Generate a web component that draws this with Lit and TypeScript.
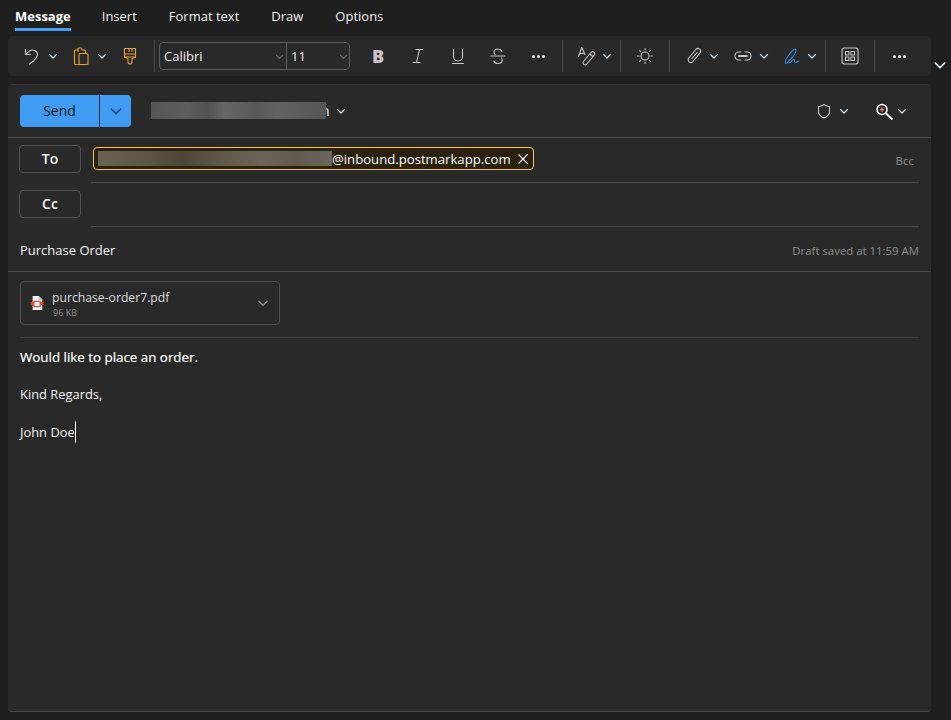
import { LitElement, html, css, svg } from 'lit';
import { customElement } from 'lit/decorators.js';

const chevronPath = svg`<path d="M2.500 4.500 6 8l3.500-3.500" fill="none" stroke="currentColor" stroke-width="1.200" stroke-linecap="round" stroke-linejoin="round"/>`;

const chevron = (cls = '') => html`<span class="chev ${cls}"><svg width="12" height="12" viewBox="0 0 12 12">${chevronPath}</svg></span>`;

const icon = (content: unknown) => html`<span class="ico"><svg width="20" height="20" viewBox="0 0 20 20" fill="none" stroke="currentColor" stroke-width="1.100" stroke-linecap="round" stroke-linejoin="round">${content}</svg></span>`;

const dots = () => html`<span class="ico dots"><i></i><i></i><i></i></span>`;

const undoIcon = svg`<path d="M3.500 3.500v5h5"/><path d="M3.800 8.200 7.500 5c3-2.200 8-.5 8 3.600 0 2.600-2 4.400-4 6.400L7.500 18"/>`;
const pasteIcon = svg`<path d="M7 4H4.500A1 1 0 0 0 3.500 5v12.500a1 1 0 0 0 1 1h3"/><path d="M7 5.500V3.200A1 1 0 0 1 8 2h2a1 1 0 0 1 1 1v1h2.500a1 1 0 0 1 1 1v2"/><rect x="8" y="7.500" width="9" height="11" rx="1"/>`;
const brushIcon = svg`<path d="M4.500 2.500h11v8.500h-11z"/><path d="M4.500 8h11M9 2.500v3M12 2.500v3"/><path d="M4.500 11l3.500 1.500v3.500a2 2 0 0 0 4 0v-3.500l3.500-1.500"/>`;
const strikeIcon = svg`<path d="M14 5.500C13 3.500 11.500 3 10 3 7.500 3 6 4.500 6 6.200c0 1 .5 1.800 1.200 2.300"/><path d="M3 10h14"/><path d="M13.500 12c.5.700.7 1.300.7 2 0 2-1.800 3.500-4.200 3.500-2 0-3.500-.8-4.200-2.500"/>`;
const stylesIcon = svg`<path d="M1.500 10.500 4.800 1.500 8 8.500M2.800 7.500h4"/><path d="M6.500 15.500 14 6.500a2 2 0 0 1 3.200 2.500L9.800 18a2 2 0 0 1-3.300-2.500z"/><path d="M12.800 8l3 2.500"/>`;
const sunIcon = svg`<circle cx="10" cy="10" r="4"/><path d="M10 2.500v1.500M10 16v1.500M2.500 10H4M16 10h1.500M4.700 4.700l1 1M14.300 14.300l1 1M15.300 4.700l-1 1M5.700 14.300l-1 1"/>`;
const clipIcon = svg`<path d="M4.800 12 11.800 3.500a2.700 2.700 0 0 1 4.200 3.400L9 15.500a2.700 2.700 0 0 1-4.200-3.500z"/><path d="M8 12.500l5-6"/>`;
const linkIcon = svg`<path d="M8 6H6a4 4 0 0 0 0 8h2"/><path d="M12 6h2a4 4 0 0 1 0 8h-2"/><path d="M6 10h8" stroke-width="1.800"/>`;
const signIcon = svg`<path d="M3.500 17C2 15 7 8 11.500 3.500c1-1 3-.5 2.500 1.500-1 3.500-5 8-7.500 10.500-1.500 1.500-3 2.500-3 1.500z"/><path d="M7 17c2 0 3-3.500 4.500-3.500s.5 3 2 3 2-1.500 3.500-1.500"/>`;
const gridIcon = svg`<rect x="2" y="2" width="16" height="16" rx="2.500"/><rect x="5.500" y="5.500" width="3.500" height="3.500"/><rect x="11" y="5.500" width="3.500" height="3.500"/><rect x="5.500" y="11" width="3.500" height="3.500"/><rect x="11" y="11" width="3.500" height="3.500"/>`;

@customElement('app-root')
export class AppRoot extends LitElement {
  static styles = css`
    :host {
      display: block;
      width: 951px;
      height: 720px;
      overflow: hidden;
      background: #1f1f1f;
      color: #fff;
      font-family: "Open Sans", "Noto Sans", sans-serif;
      font-size: 13px;
    }

    .tabs {
      display: flex;
      height: 36px;
      padding-left: 15px;
      gap: 32px;
    }

    .tab {
      height: 31px;
      box-sizing: border-box;
      padding-top: 7px;
      line-height: 18px;
      color: #f2f2f2;
    }

    .tab.on {
      margin-right: -1px;
      font-weight: 700;
      color: #fff;
      border-bottom: 3px solid #479ef5;
    }

    .ribbon-row {
      display: flex;
      padding-left: 8px;
    }

    .toolbar {
      display: flex;
      align-items: center;
      width: 923px;
      height: 40px;
      box-sizing: border-box;
      padding-left: 12px;
      background: #292929;
      border-radius: 4px;
      color: #c8c8c8;
    }

    .more-ribbon {
      flex: 1;
      display: flex;
      justify-content: center;
      align-items: flex-end;
      padding: 0 2px 3px 0;
      color: #eaf4fc;
    }

    .more-ribbon svg {
      width: 16px;
      height: 16px;
    }

    .group {
      display: flex;
      align-items: center;
      gap: 7px;
    }

    .group.text {
      gap: 16px;
      padding: 0 12px 0 16px;
    }

    .group.pad {
      padding: 0 12px;
    }

    .group.tight {
      padding: 0 4px 0 12px;
    }

    .group.first {
      padding-right: 12px;
    }

    .split {
      display: flex;
      align-items: center;
    }

    .split.close .chev {
      margin-left: -1px;
    }

    .split.wide {
      margin-left: 1px;
    }

    .ico {
      display: flex;
      justify-content: center;
      align-items: center;
      width: 24px;
      height: 24px;
    }

    .chev {
      display: flex;
      justify-content: center;
      align-items: center;
      width: 18px;
      color: #d4e4f0;
    }

    .orange {
      color: #e8a035;
    }

    .blue {
      color: #2f83da;
    }

    .bold-b {
      font-weight: 800;
      font-size: 18px;
      color: #c4c4c4;
    }

    .dots {
      gap: 2px;
    }

    .dots i {
      width: 3px;
      height: 3px;
      border-radius: 50%;
      background: #f0f0f0;
    }

    .sep {
      width: 1px;
      height: 32px;
      background: #4d4d4d;
      flex: none;
    }

    .fontbox {
      display: flex;
      width: 191px;
      height: 28px;
      box-sizing: border-box;
      margin-left: 4px;
      border: 1px solid #5c5c5c;
      border-radius: 4px;
      color: #f2f2f2;
      line-height: 26px;
    }

    .fontbox span {
      display: flex;
      justify-content: space-between;
      align-items: center;
      box-sizing: border-box;
      padding: 0 0 0 4px;
    }

    .fontbox .chev {
      color: #6f6f6f;
      padding: 0;
      width: 12px;
    }

    .fontbox .chev svg {
      width: 11px;
      height: 11px;
    }

    .face {
      width: 127px;
      border-right: 1px solid #5c5c5c;
    }

    .size {
      flex: 1;
    }

    .fontbox .size .chev {
      margin-right: -1px;
    }

    .card {
      display: flex;
      flex-direction: column;
      width: 923px;
      height: 628px;
      box-sizing: border-box;
      margin: 8px 0 0 8px;
      background: #292929;
      border-top: 1px solid #333;
      border-bottom: 1px solid #484848;
      border-radius: 4px;
    }

    .head {
      display: flex;
      align-items: center;
      height: 53px;
      box-sizing: border-box;
      padding: 0 0 1px 12px;
      border-bottom: 1px solid #4a4a4a;
      flex: none;
    }

    .send {
      display: flex;
      width: 111px;
      height: 32px;
      border-radius: 4px;
      overflow: hidden;
      background: #3f9cf2;
      color: #111;
      line-height: 32px;
      font-size: 14px;
    }

    .send b {
      width: 79px;
      font-weight: 500;
      text-align: center;
      border-right: 1px solid #14283a;
    }

    .send span {
      flex: 1;
      display: flex;
      justify-content: center;
      align-items: center;
      color: #1c4a72;
    }

    .send svg {
      width: 16px;
      height: 16px;
    }

    .from {
      display: flex;
      align-items: center;
      margin-left: 20px;
      font-size: 14px;
    }

    .smear {
      display: block;
      flex: none;
      width: 175px;
      height: 17px;
      background: linear-gradient(90deg, #555 0%, #5e5e5e 20%, #525252 32%, #666 42%, #595959 60%, #626262 72%, #555 100%);
    }

    /* the address is redacted: the smear hides all but the end of its last letter */
    .from .smear {
      position: relative;
      z-index: 1;
    }

    .from .tail {
      margin-left: -5px;
      line-height: 17px;
    }

    .from .chev {
      margin-left: 2px;
    }

    .head-right {
      display: flex;
      align-items: center;
      margin-left: auto;
      padding-right: 20px;
    }

    .head-right .shield {
      margin-right: -1px;
      color: #b9c8d4;
    }

    .head-right .zoom {
      color: #fff;
      margin-left: 19px;
    }

    .head-right .zoom + .chev {
      margin-left: -3px;
    }

    .row {
      display: flex;
      align-items: flex-start;
      height: 44.500px;
      box-sizing: border-box;
      padding: 7px 12px 0 11px;
      flex: none;
    }

    .addr {
      width: 62px;
      height: 28px;
      box-sizing: border-box;
      border: 1px solid #505050;
      border-radius: 4px;
      font-size: 14px;
      font-weight: 600;
      line-height: 26px;
      text-align: center;
      color: #f4f4f4;
      flex: none;
    }

    .field {
      flex: 1;
      display: flex;
      align-self: stretch;
      justify-content: space-between;
      box-sizing: border-box;
      margin: -7px 0 0 10px;
      padding-top: 9px;
      border-bottom: 1px solid #4a4a4a;
    }

    .pill {
      display: flex;
      align-items: center;
      height: 23px;
      box-sizing: border-box;
      margin-left: 2px;
      padding: 0 4px 0 4px;
      background: #2b2110;
      border: 1px solid #f5c84a;
      border-radius: 4px;
      font-size: 13.150px;
    }

    .pill .smear {
      width: 234px;
      height: 15px;
      background: linear-gradient(90deg, #6a6255 0%, #5b5447 22%, #4d4536 36%, #5f5849 52%, #6b6659 70%, #605a4e 85%, #6c675d 100%);
    }

    .pill svg {
      margin-left: 6px;
      width: 12px;
      height: 12px;
    }

    .bcc {
      padding: 6px 5px 0 0;
      font-size: 11.500px;
      color: #8e8e8e;
    }

    .subject {
      display: flex;
      justify-content: space-between;
      align-items: center;
      height: 45px;
      box-sizing: border-box;
      padding: 2px 12px 0;
      border-bottom: 1px solid #4a4a4a;
      color: #f2f2f2;
      flex: none;
    }

    .subject small {
      font-size: 11.400px;
      color: #8e8e8e;
    }

    .attach-wrap {
      margin: 0 12px;
      padding: 9px 0 12px;
      border-bottom: 1px solid #3e3e3e;
    }

    .attach {
      display: flex;
      align-items: center;
      width: 260px;
      height: 44px;
      box-sizing: border-box;
      padding: 0 7px 0 9px;
      border: 1px solid #505050;
      border-radius: 4px;
    }

    .attach .doc {
      flex: none;
      width: 14px;
      height: 16px;
    }

    .attach-text {
      flex: 1;
      display: flex;
      flex-direction: column;
      margin: 1px 0 0 8px;
    }

    .attach-name {
      font-size: 12.200px;
      line-height: 17px;
      color: #dedede;
    }

    .attach-size {
      margin-left: 1px;
      font-size: 9px;
      line-height: 13px;
      color: #8c8c8c;
    }

    .attach .chev {
      color: #8f8f8f;
    }

    .attach .chev svg {
      width: 14px;
      height: 14px;
    }

    .body {
      padding: 9.500px 12px 0;
      font-size: 12.900px;
      line-height: 18.800px;
      color: #f4f4f4;
    }

    .body p {
      margin: 0;
      min-height: 18.800px;
    }

    .body .lead {
      font-size: 13.350px;
      font-weight: 500;
      color: #fff;
      -webkit-text-stroke: 0.2px #fff;
    }

    .caret {
      border-right: 1px solid #fff;
      padding: 2px 0;
    }
  `;

  render() {
    return html`
      <nav class="tabs">
        <div class="tab on">Message</div>
        <div class="tab">Insert</div>
        <div class="tab">Format text</div>
        <div class="tab">Draw</div>
        <div class="tab">Options</div>
      </nav>

      <div class="ribbon-row">
        <div class="toolbar">
          <div class="group first">
            <div class="split">${icon(undoIcon)}${chevron()}</div>
            <div class="split"><span class="orange">${icon(pasteIcon)}</span>${chevron()}</div>
            <span class="orange">${icon(brushIcon)}</span>
          </div>
          <div class="sep"></div>
          <div class="fontbox">
            <span class="face">Calibri ${chevron()}</span>
            <span class="size">11 ${chevron()}</span>
          </div>
          <div class="group text">
            <span class="ico bold-b">B</span>
            ${icon(svg`<path d="M8 3.500h7M5 16.500h7M11.500 3.500l-3 13"/>`)}
            ${icon(svg`<path d="M5.500 3.500v7a4.500 4.500 0 0 0 9 0v-7M4.500 17.500h11"/>`)}
            ${icon(strikeIcon)}
            ${dots()}
          </div>
          <div class="sep"></div>
          <div class="group tight"><div class="split close">${icon(stylesIcon)}${chevron()}</div></div>
          <div class="sep"></div>
          <div class="group pad">${icon(sunIcon)}</div>
          <div class="sep"></div>
          <div class="group tight">
            <div class="split close">${icon(clipIcon)}${chevron()}</div>
            <div class="split wide">${icon(linkIcon)}${chevron()}</div>
            <div class="split close"><span class="blue">${icon(signIcon)}</span>${chevron()}</div>
          </div>
          <div class="sep"></div>
          <div class="group pad">${icon(gridIcon)}</div>
          <div class="sep"></div>
          <div class="group pad">${dots()}</div>
        </div>
        <div class="more-ribbon"><svg viewBox="0 0 12 12">${chevronPath}</svg></div>
      </div>

      <section class="card">
        <div class="head">
          <div class="send">
            <b>Send</b>
            <span><svg viewBox="0 0 12 12">${chevronPath}</svg></span>
          </div>
          <div class="from">
            <span class="smear"></span><span class="tail">n</span>${chevron()}
          </div>
          <div class="head-right">
            <span class="shield">${icon(svg`<path d="M10 3.500c1.800 1.300 3.500 2 5.500 2v5c0 3-2 5-5.500 6.500-3.500-1.500-5.500-3.500-5.500-6.500v-5c2 0 3.700-.7 5.500-2z"/>`)}</span>
            ${chevron()}
            <span class="ico zoom">
              <svg width="20" height="20" viewBox="0 0 20 20" fill="none">
                <circle cx="8" cy="8.500" r="5" stroke="currentColor" stroke-width="1.500"/>
                <path d="M12 12.500 18 18" stroke="currentColor" stroke-width="1.800" stroke-linecap="round"/>
                <path d="M5.800 8.500h4.400M8 6.300v4.400" stroke="#ff6a78" stroke-width="1.300"/>
              </svg>
            </span>
            ${chevron()}
          </div>
        </div>

        <div class="row">
          <div class="addr">To</div>
          <div class="field">
            <div class="pill">
              <span class="smear"></span>@inbound.postmarkapp.com
              <svg viewBox="0 0 12 12" fill="none" stroke="currentColor" stroke-width="1.100" stroke-linecap="round"><path d="M1.500 1.500l9 9M10.500 1.500l-9 9"/></svg>
            </div>
            <span class="bcc">Bcc</span>
          </div>
        </div>
        <div class="row">
          <div class="addr">Cc</div>
          <div class="field"></div>
        </div>

        <div class="subject">
          <span>Purchase Order</span>
          <small>Draft saved at 11:59 AM</small>
        </div>

        <div class="attach-wrap">
          <div class="attach">
            <svg class="doc" viewBox="0 0 16 18">
              <path d="M3 1h7l4 4v12H3z" fill="#f3f3f3"/>
              <path d="M10 1v4h4z" fill="#b8b8b8"/>
              <rect x="0.500" y="8" width="15" height="3.500" fill="#e2492f"/>
              <rect x="4.500" y="7" width="7" height="6" fill="#f3f3f3" stroke="#e2492f" stroke-width="1.300"/>
            </svg>
            <div class="attach-text">
              <span class="attach-name">purchase-order7.pdf</span>
              <span class="attach-size">96 KB</span>
            </div>
            ${chevron()}
          </div>
        </div>

        <div class="body">
          <p class="lead">Would like to place an order.</p>
          <p></p>
          <p>Kind Regards,</p>
          <p></p>
          <p><span class="caret">John Doe</span></p>
        </div>
      </section>
    `;
  }
}

declare global {
  interface HTMLElementTagNameMap {
    'app-root': AppRoot;
  }
}
